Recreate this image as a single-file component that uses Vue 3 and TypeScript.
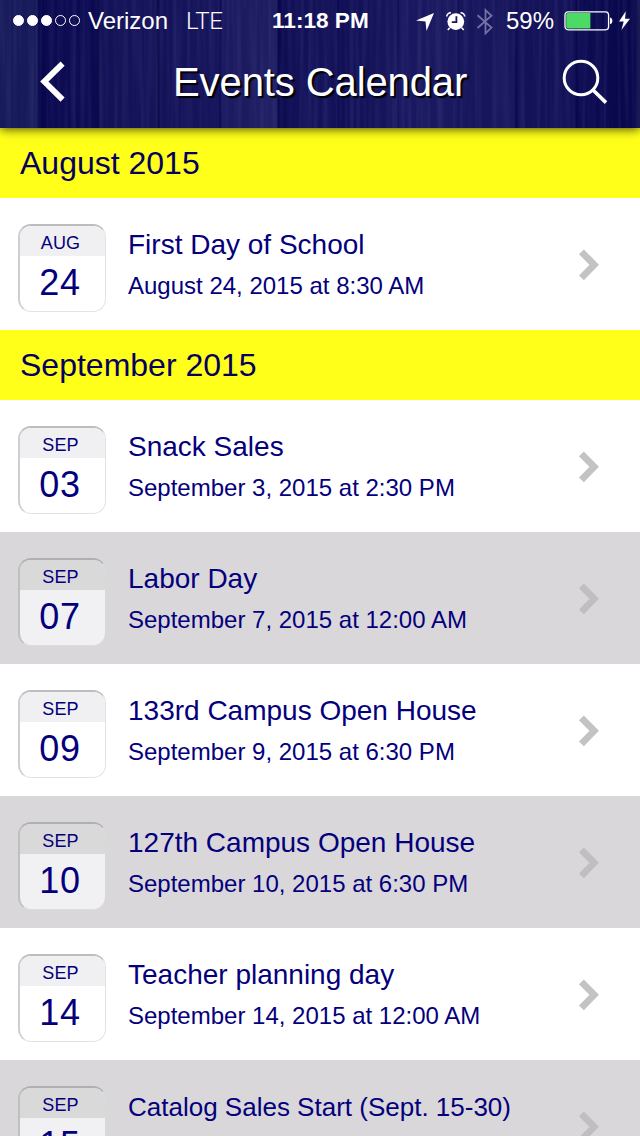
<script setup lang="ts">
interface CalendarEvent {
  month: string
  day: string
  title: string
  when?: string
  shaded?: boolean
  compact?: boolean
}
interface Section {
  label: string
  events: CalendarEvent[]
}

const signal: boolean[] = [true, true, true, false, false]

const sections: Section[] = [
  {
    label: 'August 2015',
    events: [{ month: 'AUG', day: '24', title: 'First Day of School', when: 'August 24, 2015 at 8:30 AM' }],
  },
  {
    label: 'September 2015',
    events: [
      { month: 'SEP', day: '03', title: 'Snack Sales', when: 'September 3, 2015 at 2:30 PM' },
      { month: 'SEP', day: '07', title: 'Labor Day', when: 'September 7, 2015 at 12:00 AM', shaded: true },
      { month: 'SEP', day: '09', title: '133rd Campus Open House', when: 'September 9, 2015 at 6:30 PM' },
      { month: 'SEP', day: '10', title: '127th Campus Open House', when: 'September 10, 2015 at 6:30 PM', shaded: true },
      { month: 'SEP', day: '14', title: 'Teacher planning day', when: 'September 14, 2015 at 12:00 AM' },
      { month: 'SEP', day: '15', title: 'Catalog Sales Start (Sept. 15-30)', shaded: true, compact: true },
    ],
  },
]
</script>

<template>
  <div class="screen">
    <header class="top">
      <svg class="grain" width="640" height="128" aria-hidden="true">
        <filter id="wood" x="0" y="0" width="100%" height="100%">
          <feTurbulence type="fractalNoise" baseFrequency="0.22 0.006" numOctaves="2" seed="7" />
          <feColorMatrix values="0 0 0 0 0.25  0 0 0 0 0.25  0 0 0 0 0.55  1.4 0 0 0 -0.55" />
        </filter>
        <rect width="640" height="128" filter="url(#wood)" />
      </svg>
      <div class="status">
        <div class="dots">
          <i v-for="(on, i) in signal" :key="i" class="dot" :class="{ on }" />
        </div>
        <span class="carrier">Verizon</span>
        <span class="network">LTE</span>
        <span class="clock">11:18 PM</span>
        <svg class="sys" width="82" height="34" viewBox="0 0 82 34">
          <path d="M1 19.5 19 12 11.5 30 10.5 20.5Z" fill="#fff" />
          <g fill="none" stroke="#fff" stroke-width="1.6">
            <path d="M31.7 15.5A4 4 0 0 1 36 11.8M49.8 15.5A4 4 0 0 0 45.5 11.8" />
            <path d="m34.8 26.8-2 2.3M46.7 26.8l2 2.3" />
          </g>
          <circle cx="40.8" cy="20.6" r="8.4" fill="#fff" />
          <path d="M41.4 15.2v6h-4.6" fill="none" stroke="#17145a" stroke-width="1.8" />
          <path d="m62.5 14.3 14 12.3-6 5.8V9l6 5.8-14 12.2" fill="none" stroke="#7472a5" stroke-width="1.8" />
        </svg>
        <span class="percent">59%</span>
        <svg class="battery" width="68" height="22" viewBox="0 0 68 22">
          <rect x="1" y="1.8" width="43.6" height="18" rx="3.2" fill="none" stroke="#fff" stroke-width="1.3" />
          <path d="M4 3H26.4V18.6H4Q2.2 18.6 2.2 16.8V4.8Q2.2 3 4 3Z" fill="#4cd964" />
          <path d="M46 7.4c3.2.6 3.2 6.2 0 6.8z" fill="#fff" />
          <path d="M61.8 1.2 55 11.6h4.7L57.4 20 66 8.8h-5z" fill="#fff" />
        </svg>
      </div>
      <nav class="bar">
        <svg class="back" width="26" height="42" viewBox="0 0 26 42">
          <path d="M23.6 2.6 5.3 20.6l18.3 18" fill="none" stroke="#fff" stroke-width="5.8" />
        </svg>
        <h1 class="title">Events Calendar</h1>
        <svg class="search" width="46" height="46" viewBox="0 0 46 46">
          <circle cx="19" cy="19" r="16.8" fill="none" stroke="#fff" stroke-width="3" />
          <path d="m31 31 13 12.6" fill="none" stroke="#fff" stroke-width="3.6" />
        </svg>
      </nav>
    </header>
    <main>
      <section v-for="s in sections" :key="s.label">
        <h2 class="heading">{{ s.label }}</h2>
        <article v-for="e in s.events" :key="e.title" class="row" :class="{ shaded: e.shaded }">
          <div class="date">
            <div class="month">{{ e.month }}</div>
            <div class="day">{{ e.day }}</div>
          </div>
          <div class="text">
            <div class="name" :class="{ compact: e.compact }">{{ e.title }}</div>
            <div v-if="e.when" class="when">{{ e.when }}</div>
          </div>
          <svg class="chevron" width="22" height="34" viewBox="0 0 22 34">
            <path d="M3.4 3.8 16.2 16.8 3.4 29.8" fill="none" stroke="currentColor" stroke-width="6.8" />
          </svg>
        </article>
      </section>
    </main>
  </div>
</template>

<style>
body {
  overflow: hidden;
}
</style>

<style scoped>
.screen {
  width: 640px;
  height: 1136px;
  overflow: hidden;
  background: #fff;
  color: #04007c;
  font-family: 'Liberation Sans', Arial, sans-serif;
}
.top {
  position: relative;
  z-index: 1;
  height: 128px;
  color: #fff;
  background: linear-gradient(
    90deg,
    #171a5a 0 37px, #07054a 38px, #0d0b52 60px, #0b0950 97px,
    #05033f 98px, #131156 100px, #15135a 157px,
    #05033f 158px, #131157 160px, #17155c 219px,
    #0c0a4d 220px, #1b195f 222px, #1e1c61 277px,
    #08064b 278px, #121057 290px, #131158 337px,
    #06044a 338px, #100e55 340px, #18165c 397px,
    #0b094e 398px, #19175f 400px, #1a185f 457px,
    #0d0b50 458px, #17155c 460px, #17155b 515px,
    #08064a 516px, #131158 518px, #131158 575px,
    #07054a 576px, #0b0950 578px, #0a084c 635px, #1a1a55 638px
  );
  box-shadow: 0 1px 10px rgba(0, 0, 0, 0.75);
}
.grain {
  position: absolute;
  inset: 0;
  opacity: 0.2;
}
.status {
  position: relative;
  display: flex;
  height: 40px;
  align-items: center;
  padding-left: 13px;
  font-size: 24px;
  line-height: 40px;
  white-space: nowrap;
}
.dots {
  display: flex;
  gap: 3px;
  width: 75px;
  padding-top: 1px;
}
.dot {
  box-sizing: border-box;
  width: 11px;
  height: 11px;
  border: 1px solid #fff;
  border-radius: 50%;
}
.dot.on {
  background: #fff;
}
.carrier {
  width: 98px;
  padding-top: 2px;
}
.network {
  width: 86px;
  padding-top: 2px;
  font-family: Roboto, sans-serif;
  font-weight: 300;
  letter-spacing: -0.3px;
}
.clock {
  width: 143px;
  padding-top: 2px;
  font-weight: bold;
  font-size: 22.6px;
}
.sys {
  width: 82px;
  margin-bottom: 5px;
}
.percent {
  width: 66px;
  margin-left: 9px;
  padding-top: 2px;
}
.battery {
  margin: 2px 0 0 -8px;
}
.bar {
  position: relative;
  display: flex;
  align-items: center;
  height: 84px;
  padding: 0 32px 0 39px;
}
.title {
  flex: 1;
  margin: 0 0 0 108px;
  font-size: 40px;
  font-weight: normal;
  line-height: 84px;
  letter-spacing: -0.1px;
  text-shadow: 2px 2px 1px #000;
  white-space: nowrap;
}
.heading {
  height: 70px;
  margin: 0;
  padding-left: 20px;
  background: #ffff1a;
  color: #06005f;
  font-size: 32px;
  font-weight: normal;
  line-height: 71px;
}
.row {
  display: flex;
  height: 132px;
  background: #fff;
}
.row.shaded {
  background: #d9d7d9;
}
.date {
  box-sizing: border-box;
  width: 88px;
  height: 88px;
  margin: 26px 0 0 18px;
  overflow: hidden;
  border: 1px solid #e3e3e6;
  border-top: 2px solid #bdbdc0;
  border-left: 2px solid #cfcfd2;
  border-radius: 13px;
  background: #fff;
  text-align: center;
}
.month {
  height: 30px;
  padding-right: 4px;
  background: #f0eff1;
  font-size: 18px;
  line-height: 34px;
  letter-spacing: 0.2px;
}
.day {
  padding-right: 5px;
  font-size: 36px;
  line-height: 53px;
  letter-spacing: 0.8px;
}
.shaded .date {
  border-color: #b0afb2 #d9d7d9 #dddddf #bfbec1;
  background: #f1f0f2;
}
.shaded .month {
  background: #d9d9da;
}
.text {
  flex: 1;
  padding: 30px 0 0 22px;
  white-space: nowrap;
}
.name {
  font-size: 28px;
  line-height: 34px;
}
.name.compact {
  font-size: 26px;
  line-height: 35px;
}
.when {
  margin-top: 8px;
  font-size: 24px;
  line-height: 32px;
}
.chevron {
  margin: 50px 40px 0 0;
  color: #c3c2c5;
}
.shaded .chevron {
  color: #bfbec1;
}
</style>
